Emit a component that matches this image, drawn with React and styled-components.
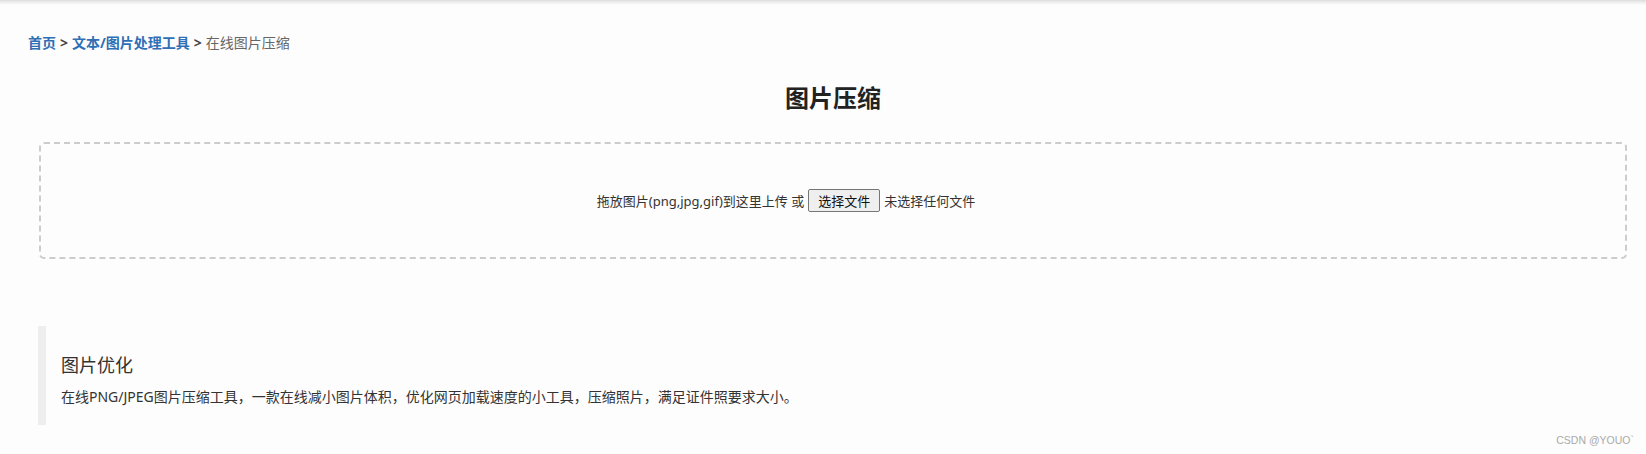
import styled, { createGlobalStyle } from "styled-components";

const GlobalStyle = createGlobalStyle`
  body {
    margin: 0;
    background: #fdfdfd;
    font-family: "Noto Sans", "Noto Sans CJK SC", sans-serif;
    color: #333;
  }
`;

const App = () => {
  return (
    <Page>
      <GlobalStyle />
      <TopShadow />
      <Breadcrumb>
        <Crumb href="#">首页</Crumb>
        <Sep>&gt;</Sep>
        <Crumb href="#">文本/图片处理工具</Crumb>
        <Sep>&gt;</Sep>
        <Current>在线图片压缩</Current>
      </Breadcrumb>

      <Main>
        <Title>图片压缩</Title>

        <DropZone>
          <DropText>拖放图片(png,jpg,gif)到这里上传 或</DropText>
          <FileButton type="button">选择文件</FileButton>
          <FileName>未选择任何文件</FileName>
        </DropZone>

        <Info>
          <InfoTitle>图片优化</InfoTitle>
          <InfoText>
            在线PNG/JPEG图片压缩工具，一款在线减小图片体积，优化网页加载速度的小工具，压缩照片，满足证件照要求大小。
          </InfoText>
        </Info>
      </Main>

      <Watermark>CSDN @YOUO`</Watermark>
    </Page>
  );
};

export default App;

const Page = styled.div`
  position: relative;
  min-height: 454px;
  box-sizing: border-box;
  padding: 0 19px 0 28px;
  display: flex;
  flex-direction: column;
`;

const TopShadow = styled.div`
  height: 5px;
  margin: 0 -19px 0 -28px;
  background: linear-gradient(#dcdcdc, #ececec 40%, #fdfdfd);
`;

const Breadcrumb = styled.div`
  display: flex;
  align-items: center;
  padding-top: 28px;
  font-size: 14px;
  line-height: 20px;
`;

const Crumb = styled.a`
  color: #2f6fb5;
  font-weight: bold;
  text-decoration: none;
`;

const Sep = styled.span`
  color: #444;
  font-weight: bold;
  margin: 0 4px;
`;

const Current = styled.span`
  color: #666;
`;

const Main = styled.div`
  margin-left: 11px;
  display: flex;
  flex-direction: column;
`;

const Title = styled.h1`
  margin: 28px 0 0;
  text-align: center;
  font-size: 24px;
  line-height: 34px;
  font-weight: bold;
  color: #222;
`;

const DropZone = styled.div`
  margin-top: 27px;
  height: 117px;
  box-sizing: border-box;
  border: 2px dashed #cccccc;
  border-radius: 5px;
  display: flex;
  align-items: center;
  justify-content: center;
  font-size: 13px;
  color: #333;
`;

const DropText = styled.span`
  margin-right: 4px;
`;

const FileButton = styled.button`
  width: 72px;
  height: 23px;
  padding: 0 6px;
  background: #efefef;
  border: 1px solid #767676;
  border-radius: 2px;
  font-family: inherit;
  font-size: 13px;
  color: #111;
`;

const FileName = styled.span`
  width: 185px;
  margin-left: 4px;
`;

const Info = styled.section`
  margin-top: 67px;
  margin-left: -1px;
  height: 99px;
  box-sizing: border-box;
  border-left: 8px solid #eeeeee;
  padding: 26px 15px 0;
`;

const InfoTitle = styled.h3`
  margin: 0;
  font-size: 18px;
  line-height: 26px;
  font-weight: normal;
  color: #333;
`;

const InfoText = styled.p`
  margin: 9px 0 0;
  font-size: 14px;
  line-height: 20px;
  color: #333;
`;

const Watermark = styled.div`
  position: absolute;
  right: 12px;
  bottom: 8px;
  font-family: "Liberation Sans", Arial, sans-serif;
  font-size: 10.5px;
  color: #aaa;
`;
